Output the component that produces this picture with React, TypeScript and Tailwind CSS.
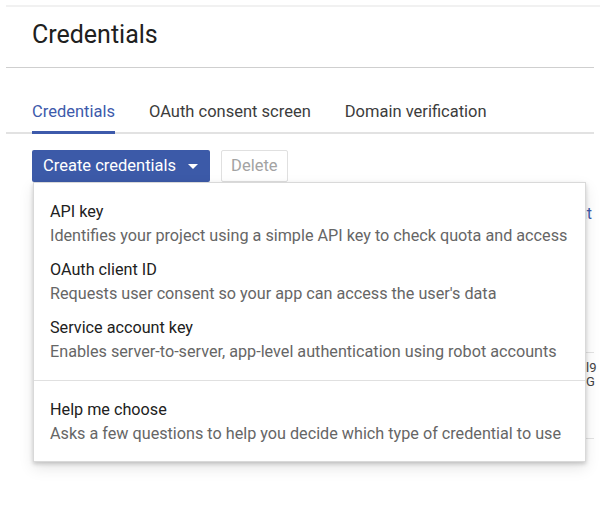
type CredentialOption = {
  title: string;
  description: string;
};

const options: CredentialOption[] = [
  {
    title: "API key",
    description:
      "Identifies your project using a simple API key to check quota and access",
  },
  {
    title: "OAuth client ID",
    description: "Requests user consent so your app can access the user's data",
  },
  {
    title: "Service account key",
    description:
      "Enables server-to-server, app-level authentication using robot accounts",
  },
];

const helpOption: CredentialOption = {
  title: "Help me choose",
  description:
    "Asks a few questions to help you decide which type of credential to use",
};

const tabs = ["Credentials", "OAuth consent screen", "Domain verification"];

function MenuItem({ option }: { option: CredentialOption }) {
  return (
    <div className="cursor-pointer">
      <div className="text-[16.2px] leading-6 text-[#212121]">{option.title}</div>
      <div className="text-[16.2px] leading-6 text-[#666666]">
        {option.description}
      </div>
    </div>
  );
}

function CreateMenu() {
  return (
    <div className="absolute left-[1px] top-full z-10 w-[553px] border border-[#d9d9d9] bg-white shadow-[0_2px_4px_rgba(0,0,0,0.18),0_6px_14px_rgba(0,0,0,0.1)]">
      <div className="flex flex-col gap-[10px] px-4 pb-4 pt-[17px]">
        {options.map((option) => (
          <MenuItem key={option.title} option={option} />
        ))}
      </div>
      <div className="border-t border-[#e0e0e0] px-4 pb-[15px] pt-[17px]">
        <MenuItem option={helpOption} />
      </div>
    </div>
  );
}

export default function App() {
  return (
    <div
      className="relative h-[509px] w-[600px] overflow-hidden bg-white"
      style={{ fontFamily: "Roboto, 'Liberation Sans', sans-serif" }}
    >
      <div className="ml-[6px] mt-[5px] h-[2px] bg-[#f1f1f1]" />

      <header className="mx-[6px] border-b border-[#cfcfcf] pb-4 pl-[26px] pt-3">
        <h1 className="text-[25px] leading-8 text-[#202020]">Credentials</h1>
      </header>

      <nav className="mx-[6px] mt-8 flex gap-[34px] border-b-2 border-[#e2e2e2] pl-[26px]">
        {tabs.map((tab, i) => (
          <div
            key={tab}
            className={
              i === 0
                ? "-mb-[2px] border-b-[3px] border-[#3d5aab] pb-[7px] text-[16.5px] leading-6 text-[#3d5aab]"
                : "-mb-[2px] border-b-[3px] border-transparent pb-[7px] text-[16.5px] leading-6 text-[#3c3c3c]"
            }
          >
            {tab}
          </div>
        ))}
      </nav>

      <div className="relative ml-8 mt-4 flex gap-[11px]">
        <button className="flex h-8 items-center gap-3 rounded-[2px] bg-[#3c5aa8] pl-[11px] pr-3 text-[16.5px] text-white">
          Create credentials
          <span className="h-0 w-0 border-x-[5px] border-t-[5px] border-x-transparent border-t-white" />
        </button>
        <button className="h-8 rounded-[2px] border border-[#e0e0e0] bg-white px-[9px] text-[16.5px] text-[#a3a3a3]">
          Delete
        </button>
        <CreateMenu />
      </div>

      <section className="pl-9 pr-[6px]">
        <p className="mt-5 pr-[2px] text-right text-[16px] leading-6">
          <a className="text-[#3d5aab]">Manage service account</a>
        </p>
        <div className="mt-[126px] grid h-[87px] grid-cols-[549px_1fr] border-y border-[#e3e3e3] pt-[8px] text-[13px] leading-[14px] text-[#444]">
          <div />
          <div className="pl-[1px]">
            <div>l9</div>
            <div>G</div>
          </div>
        </div>
      </section>
    </div>
  );
}
